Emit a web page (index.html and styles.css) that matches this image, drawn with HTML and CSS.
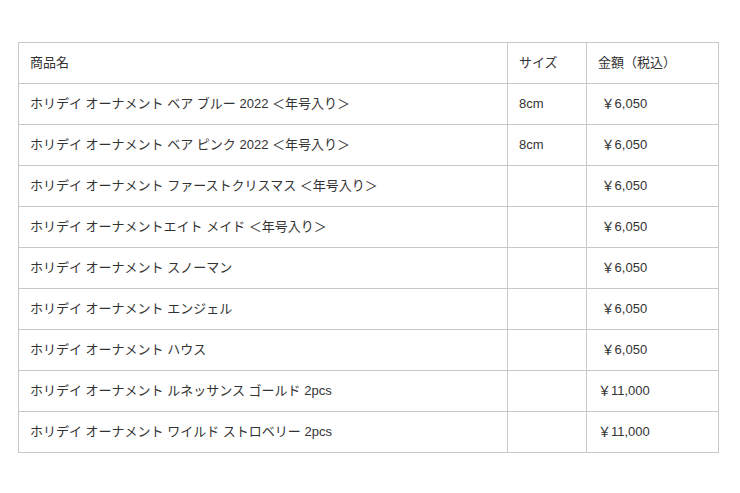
FILE: index.html
```html
<!DOCTYPE html>
<html lang="ja">
<head>
<meta charset="utf-8">
<link rel="stylesheet" href="styles.css">
</head>
<body>
<div class="wrap">
<table class="items">
  <colgroup><col class="c-name"><col class="c-size"><col class="c-price"></colgroup>
  <tr><td>商品名</td><td>サイズ</td><td>金額（税込）</td></tr>
  <tr><td>ホリデイ オーナメント ベア ブルー 2022 ＜年号入り＞</td><td>8cm</td><td>&nbsp;￥6,050</td></tr>
  <tr><td>ホリデイ オーナメント ベア ピンク 2022 ＜年号入り＞</td><td>8cm</td><td>&nbsp;￥6,050</td></tr>
  <tr><td>ホリデイ オーナメント ファーストクリスマス ＜年号入り＞</td><td></td><td>&nbsp;￥6,050</td></tr>
  <tr><td>ホリデイ オーナメントエイト メイド ＜年号入り＞</td><td></td><td>&nbsp;￥6,050</td></tr>
  <tr><td>ホリデイ オーナメント スノーマン</td><td></td><td>&nbsp;￥6,050</td></tr>
  <tr><td>ホリデイ オーナメント エンジェル</td><td></td><td>&nbsp;￥6,050</td></tr>
  <tr><td>ホリデイ オーナメント ハウス</td><td></td><td>&nbsp;￥6,050</td></tr>
  <tr><td>ホリデイ オーナメント ルネッサンス ゴールド 2pcs</td><td></td><td>￥11,000</td></tr>
  <tr><td>ホリデイ オーナメント ワイルド ストロベリー 2pcs</td><td></td><td>￥11,000</td></tr>
</table>
</div>
</body>
</html>
```
FILE: styles.css
```css
html, body {
  margin: 0;
  padding: 0;
  background: #fff;
}
.wrap {
  padding: 42px 0 0 18px;
}
.items {
  border-collapse: collapse;
  width: 700px;
  table-layout: fixed;
  font-family: "Liberation Sans", "Noto Sans CJK JP", sans-serif;
  font-size: 13px;
  color: #333;
}
.c-name { width: 489px; }
.c-size { width: 79px; }
.c-price { width: 132px; }
.items td {
  border: 1px solid #c8c8c8;
  height: 41px;
  padding: 0 11px;
  box-sizing: border-box;
  vertical-align: middle;
  white-space: nowrap;
  line-height: 18px;
}
```
